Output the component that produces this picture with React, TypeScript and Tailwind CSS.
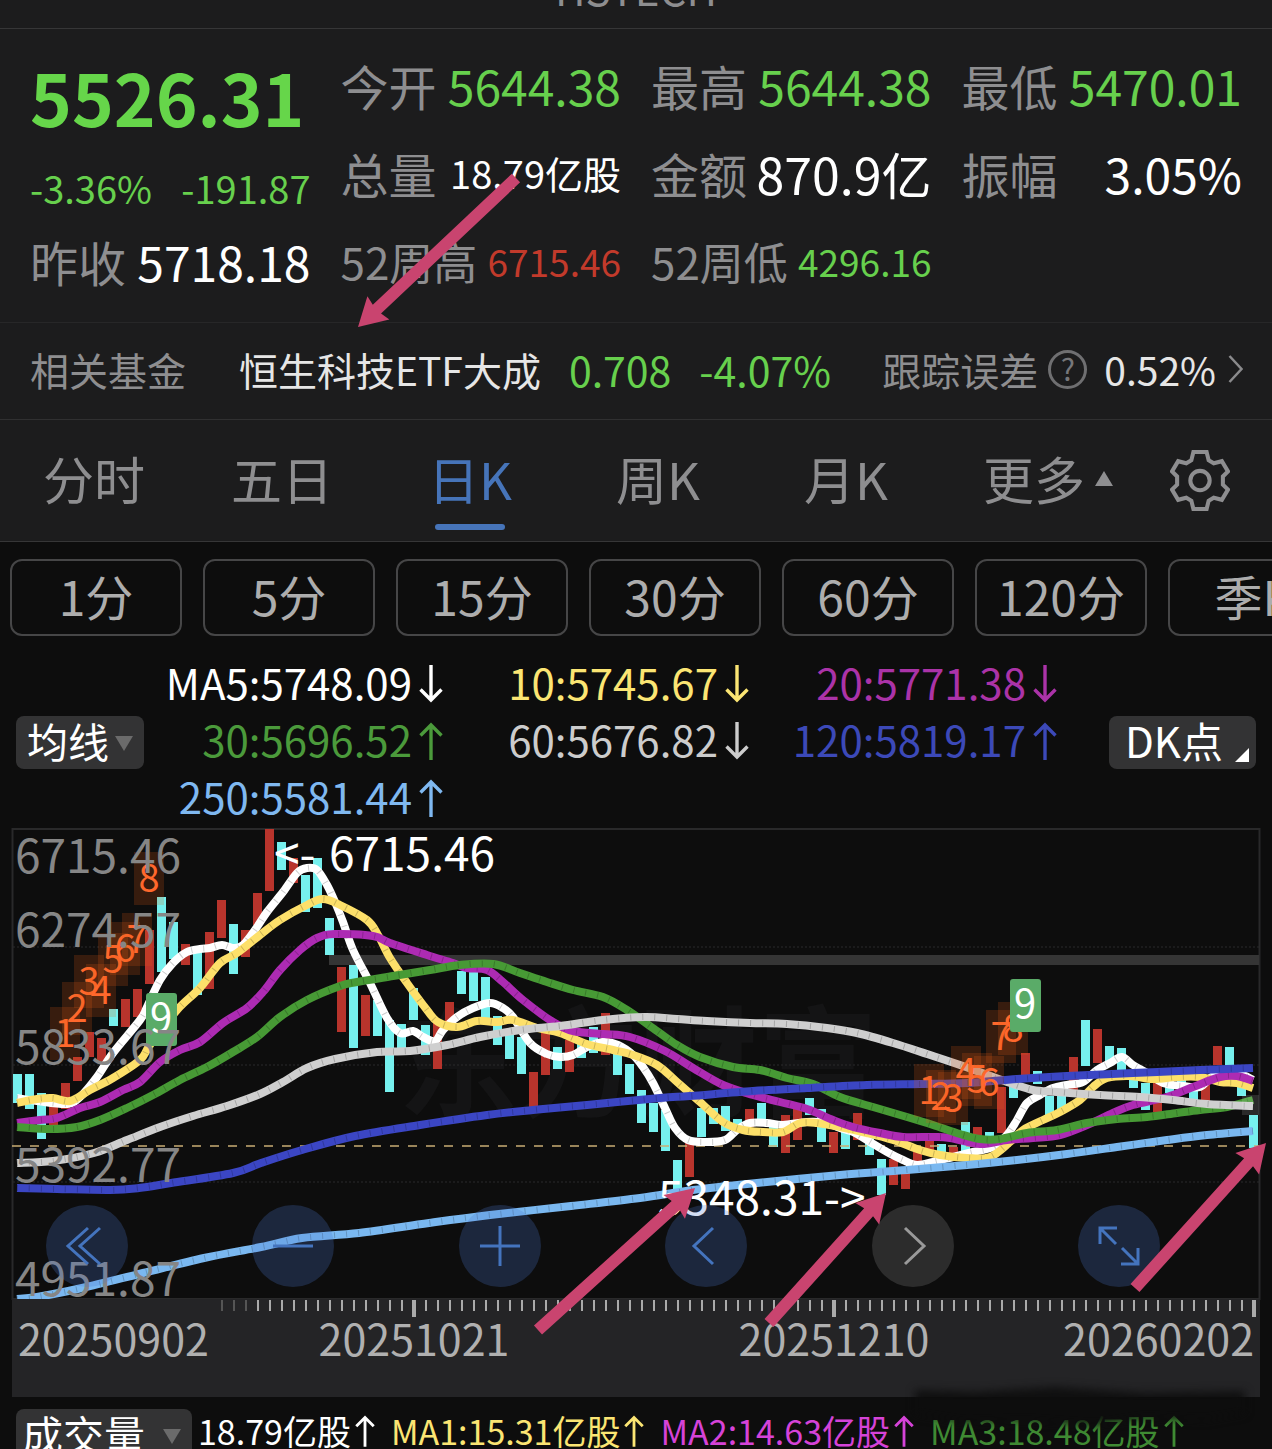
import * as React from "react"
import { clsx } from "clsx"

type Point = [number, number]

const UP = "#b8342c"
const DOWN = "#76f0ee"

const quotes = [
    [
        { label: "今开", value: "5644.38", labelClass: "text-[48px]", valueClass: "text-[48px] text-[#67d04d]" },
        { label: "总量", value: "18.79亿股", labelClass: "text-[48px]", valueClass: "text-[38px] text-white" },
        { label: "52周高", value: "6715.46", labelClass: "text-[44px]", valueClass: "text-[37px] text-[#c23a2b]" },
    ],
    [
        { label: "最高", value: "5644.38", labelClass: "text-[48px]", valueClass: "text-[48px] text-[#67d04d]" },
        { label: "金额", value: "870.9亿", labelClass: "text-[48px]", valueClass: "text-[50px] text-white" },
        { label: "52周低", value: "4296.16", labelClass: "text-[44px]", valueClass: "text-[37px] text-[#67d04d]" },
    ],
    [
        { label: "最低", value: "5470.01", labelClass: "text-[48px]", valueClass: "text-[48px] text-[#67d04d]" },
        { label: "振幅", value: "3.05%", labelClass: "text-[48px]", valueClass: "text-[48px] text-white" },
    ],
]

const tabs = ["分时", "五日", "日K", "周K", "月K"]
const periods = ["1分", "5分", "15分", "30分", "60分", "120分", "季K"]

const averages = [
    { text: "MA5:5748.09", up: false, color: "text-white" },
    { text: "10:5745.67", up: false, color: "text-[#fbe573]" },
    { text: "20:5771.38", up: false, color: "text-[#ab33a8]" },
    { text: "30:5696.52", up: true, color: "text-[#4b9a3b]" },
    { text: "60:5676.82", up: false, color: "text-[#cccccc]" },
    { text: "120:5819.17", up: true, color: "text-[#3c49b8]" },
    { text: "250:5581.44", up: true, color: "text-[#7fb8f0]" },
]

const volumes = [
    { text: "18.79亿股", color: "text-white" },
    { text: "MA1:15.31亿股", color: "text-[#fbe573]" },
    { text: "MA2:14.63亿股", color: "text-[#d543d8]" },
    { text: "MA3:18.48亿股", color: "text-[#3f8a33]" },
]

// [top, bottom, rising] for each trading day
const candles: [number, number, 0 | 1][] = [
    [1074, 1103, 0], [1074, 1109, 0], [1093, 1139, 0], [1095, 1125, 1], [1083, 1109, 1], [1057, 1081, 1],
    [1032, 1057, 1], [1038, 1062, 1], [1009, 1026, 0], [999, 1027, 1], [989, 1017, 1], [930, 984, 1],
    [897, 972, 0], [922, 959, 0], [944, 965, 1], [948, 995, 0], [932, 989, 1], [900, 938, 1],
    [924, 974, 0], [930, 957, 1], [893, 925, 1], [829, 891, 1], [842, 870, 0], [858, 883, 1],
    [875, 912, 0], [858, 908, 0], [918, 955, 0], [967, 1032, 1], [965, 1048, 0], [995, 1036, 1],
    [1000, 1036, 0], [1020, 1092, 0], [1024, 1048, 0], [988, 1020, 0], [1025, 1055, 0], [1023, 1069, 1],
    [1002, 1022, 1], [971, 994, 0], [971, 1001, 0], [977, 1018, 0], [1016, 1045, 0], [1033, 1059, 0],
    [1037, 1074, 0], [1072, 1107, 1], [1032, 1075, 1], [1047, 1069, 0], [1040, 1072, 1], [1043, 1058, 0],
    [1027, 1053, 0], [1013, 1055, 1], [1050, 1075, 0], [1064, 1094, 0], [1090, 1123, 0], [1103, 1132, 0],
    [1110, 1151, 0], [1160, 1190, 0], [1142, 1177, 1], [1108, 1137, 0], [1108, 1124, 0], [1106, 1131, 0],
    [1119, 1133, 0], [1109, 1127, 1], [1103, 1123, 0], [1127, 1147, 0], [1115, 1153, 1], [1109, 1140, 1],
    [1098, 1115, 0], [1109, 1142, 0], [1132, 1153, 1], [1129, 1149, 0], [1113, 1140, 1], [1137, 1155, 0],
    [1159, 1195, 0], [1159, 1185, 1], [1170, 1189, 1], [1152, 1166, 1], [1138, 1153, 1], [1144, 1160, 0],
    [1147, 1157, 1], [1122, 1152, 0], [1127, 1140, 1], [1132, 1147, 0], [1087, 1133, 1], [1080, 1098, 0],
    [1053, 1075, 1], [1071, 1084, 0], [1096, 1117, 0], [1093, 1113, 0], [1057, 1092, 1], [1020, 1066, 0],
    [1029, 1063, 1], [1046, 1064, 0], [1048, 1074, 0], [1074, 1088, 0], [1083, 1110, 0], [1083, 1112, 1],
    [1081, 1093, 0], [1068, 1090, 0], [1083, 1100, 0], [1083, 1101, 1], [1046, 1065, 1], [1047, 1065, 0],
    [1080, 1096, 0], [1115, 1148, 0],
]

const lines: { color: string; points: Point[] }[] = [
    {
        // MA5
        color: "#ffffff",
        points: [
            [17, 1098], [37, 1101], [67, 1104], [80, 1097], [97, 1077], [113, 1053], [140, 1020], [147, 1007],
            [160, 980], [173, 963], [187, 952], [200, 949], [210, 948], [222, 945], [233, 948], [243, 945],
            [257, 927], [267, 912], [283, 892], [297, 873], [307, 868], [317, 870], [327, 885], [335, 902],
            [343, 922], [353, 950], [370, 983], [387, 1018], [400, 1033], [413, 1031], [423, 1037], [435, 1041],
            [443, 1030], [457, 1017], [473, 1008], [490, 1003], [503, 1008], [513, 1017], [530, 1043],
            [547, 1054], [560, 1057], [573, 1055], [587, 1047], [603, 1042], [618, 1045], [633, 1055],
            [643, 1067], [653, 1083], [665, 1108], [675, 1128], [688, 1140], [707, 1142], [725, 1140],
            [737, 1130], [750, 1123], [767, 1123], [783, 1125], [807, 1122], [827, 1123], [840, 1128],
            [853, 1132], [870, 1142], [887, 1152], [903, 1160], [917, 1165], [933, 1162], [953, 1157],
            [973, 1152], [993, 1147], [1007, 1135], [1017, 1120], [1027, 1103], [1040, 1095], [1053, 1088],
            [1067, 1085], [1083, 1082], [1097, 1070], [1110, 1063], [1122, 1057], [1133, 1065], [1147, 1073],
            [1163, 1083], [1183, 1086], [1200, 1087], [1213, 1076], [1230, 1073], [1243, 1075], [1253, 1080],
        ],
    },
    {
        // MA10
        color: "#fde06a",
        points: [
            [17, 1103], [37, 1099], [53, 1098], [70, 1101], [90, 1090], [113, 1078], [140, 1060], [150, 1045],
            [177, 1010], [200, 988], [220, 963], [237, 953], [260, 935], [280, 920], [307, 905], [323, 899],
            [340, 905], [367, 920], [378, 935], [390, 958], [407, 983], [427, 1010], [438, 1022], [457, 1027],
            [477, 1021], [497, 1022], [513, 1020], [537, 1028], [560, 1033], [587, 1044], [613, 1050],
            [633, 1055], [657, 1065], [677, 1082], [700, 1102], [723, 1122], [743, 1130], [763, 1132],
            [783, 1132], [800, 1123], [817, 1123], [840, 1127], [867, 1133], [893, 1140], [920, 1150],
            [940, 1155], [967, 1158], [990, 1157], [1010, 1142], [1023, 1130], [1043, 1120], [1060, 1112],
            [1080, 1100], [1093, 1087], [1107, 1078], [1130, 1076], [1153, 1079], [1177, 1077], [1200, 1077],
            [1220, 1082], [1237, 1083], [1253, 1088],
        ],
    },
    {
        // MA20
        color: "#ad2bb3",
        points: [
            [17, 1123], [40, 1120], [57, 1118], [80, 1108], [100, 1102], [123, 1090], [140, 1082], [160, 1062],
            [180, 1050], [200, 1042], [223, 1023], [247, 1008], [263, 992], [280, 970], [300, 950], [317, 938],
            [335, 934], [373, 936], [390, 943], [427, 955], [453, 963], [467, 968], [487, 970], [503, 982],
            [523, 1000], [553, 1022], [573, 1031], [603, 1034], [630, 1037], [665, 1051], [693, 1068],
            [723, 1085], [753, 1095], [780, 1102], [807, 1109], [833, 1120], [853, 1127], [880, 1133],
            [903, 1137], [933, 1137], [950, 1138], [980, 1144], [1007, 1140], [1033, 1138], [1060, 1135],
            [1087, 1125], [1113, 1113], [1133, 1105], [1167, 1097], [1193, 1087], [1220, 1077], [1237, 1076],
            [1253, 1081],
        ],
    },
    {
        // MA30
        color: "#479a35",
        points: [
            [17, 1127], [50, 1129], [77, 1127], [100, 1120], [127, 1108], [153, 1095], [180, 1080],
            [207, 1067], [233, 1052], [257, 1037], [280, 1017], [307, 1000], [340, 986], [357, 982],
            [393, 976], [430, 970], [460, 965], [493, 964], [520, 973], [547, 982], [573, 990], [603, 997],
            [627, 1010], [657, 1031], [677, 1045], [700, 1057], [733, 1067], [760, 1070], [787, 1078],
            [813, 1084], [840, 1097], [873, 1107], [907, 1117], [933, 1125], [960, 1134], [980, 1139],
            [1000, 1139], [1027, 1133], [1057, 1130], [1087, 1123], [1117, 1119], [1147, 1117], [1177, 1113],
            [1200, 1110], [1227, 1107], [1253, 1100],
        ],
    },
    {
        // MA60
        color: "#cfcfcf",
        points: [
            [17, 1163], [53, 1161], [94, 1153], [127, 1140], [160, 1127], [193, 1116], [227, 1106],
            [260, 1094], [283, 1082], [307, 1068], [335, 1059], [377, 1052], [410, 1051], [447, 1045],
            [480, 1037], [520, 1030], [560, 1026], [603, 1020], [645, 1017], [677, 1019], [707, 1021],
            [750, 1023], [787, 1024], [827, 1028], [857, 1033], [893, 1043], [927, 1054], [960, 1065],
            [1007, 1082], [1033, 1090], [1057, 1092], [1100, 1095], [1140, 1097], [1173, 1100], [1207, 1104],
            [1253, 1106],
        ],
    },
    {
        // MA120
        color: "#3b46c4",
        points: [
            [17, 1188], [57, 1189], [110, 1190], [139, 1188], [171, 1183], [233, 1173], [261, 1163],
            [302, 1150], [355, 1136], [420, 1125], [487, 1115], [533, 1110], [587, 1105], [660, 1098],
            [690, 1096], [753, 1091], [807, 1088], [867, 1085], [920, 1084], [967, 1083], [1017, 1079],
            [1067, 1076], [1133, 1073], [1200, 1070], [1253, 1068],
        ],
    },
    {
        // MA250
        color: "#7ab8f0",
        points: [
            [17, 1299], [37, 1297], [82, 1288], [143, 1273], [204, 1258], [261, 1247], [302, 1238],
            [359, 1233], [429, 1223], [490, 1215], [571, 1206], [640, 1198], [693, 1190], [757, 1183],
            [840, 1175], [907, 1170], [967, 1165], [1017, 1160], [1067, 1154], [1117, 1147], [1167, 1140],
            [1207, 1135], [1253, 1131],
        ],
    },
]

// TD sequence numbers: [label, center x, baseline y]
const counts: [string, number, number][] = [
    ["1", 65, 1047], ["2", 77, 1022], ["3", 89, 995], ["4", 101, 1004], ["5", 113, 973], ["6", 125, 962],
    ["7", 137, 953], ["8", 149, 892], ["1", 929, 1104], ["2", 941, 1110], ["3", 953, 1112], ["4", 966, 1086],
    ["5", 977, 1093], ["6", 989, 1096], ["7", 1001, 1050], ["8", 1013, 1042],
]
const nines: Point[] = [[161, 1032], [1025, 1018]]

const prices: [string, number][] = [
    ["6715.46", 873], ["6274.57", 947], ["5833.67", 1064], ["5392.77", 1182], ["4951.87", 1296],
]

const smooth = (p: Point[]) => {
    let d = `M${p[0][0]} ${p[0][1]}`
    for (let i = 0; i < p.length - 1; i++) {
        const a = p[i - 1] || p[i]
        const b = p[i]
        const c = p[i + 1]
        const e = p[i + 2] || c
        d += ` C${b[0] + (c[0] - a[0]) / 6} ${b[1] + (c[1] - a[1]) / 6} ${c[0] - (e[0] - b[0]) / 6} ${c[1] - (e[1] - b[1]) / 6} ${c[0]} ${c[1]}`
    }
    return d
}

const TrendArrow = ({ up, className }: { up: boolean; className?: string }) => (
    <svg viewBox="0 0 24 38" className={clsx("shrink-0", className)} fill="none" stroke="currentColor" strokeWidth="3.4" aria-hidden="true">
        {up ? <path d="M12 38V3M1.5 13.5 12 3l10.5 10.5" /> : <path d="M12 0v35M1.5 24.5 12 35l10.5-10.5" />}
    </svg>
)

const IndicatorSelect = ({ label, className }: { label: string; className: string }) => (
    <div className={clsx("relative shrink-0", className)}>
        <select aria-label={label} className="h-[53px] w-full appearance-none rounded-lg bg-[#333334] pb-1 text-[41px] leading-[47px] text-white">
            <option>{label}</option>
        </select>
        <svg viewBox="0 0 18 15" className="pointer-events-none absolute right-[11px] top-5 w-[18px]" fill="#6b6b6b" aria-hidden="true">
            <path d="M0 0h18L9 15z" />
        </svg>
    </div>
)

const Quote = () => (
    <section className="grid grid-cols-4 gap-x-[30px] border-b border-[#272728] px-[30px] pb-[14px] pt-[15px]">
        <div>
            <div className="flex h-[104px] items-center text-[71px] font-bold text-[#66d64a]">5526.31</div>
            <div className="flex h-[72px] items-center justify-between pt-2 text-[38px] text-[#67d04d]">
                <span>-3.36%</span>
                <span>-191.87</span>
            </div>
            <div className="flex h-[88px] items-center justify-between pb-[6px] text-[48px] text-white">
                <span className="text-[#8e8e90]">昨收</span>
                <span>5718.18</span>
            </div>
        </div>
        {quotes.map((column, i) => (
            <div key={i}>
                {column.map((item) => (
                    <div key={item.label} className="flex h-[88px] items-center justify-between pb-[6px]">
                        <span className={clsx("text-[#8e8e90]", item.labelClass)}>{item.label}</span>
                        <span className={item.valueClass}>{item.value}</span>
                    </div>
                ))}
            </div>
        ))}
    </section>
)

const RelatedFund = () => (
    <a href="#fund" className="flex h-[97px] items-center border-b border-[#303031] pb-1 pl-[30px] pr-[29px] text-[39px] text-[#e6e6e6]">
        <span className="mr-[53px] text-[#8e8e90]">相关基金</span>
        <span className="mr-[28px]">恒生科技ETF大成</span>
        <span className="mr-[28px] text-[41px] text-[#67d04d]">0.708</span>
        <span className="text-[41px] text-[#67d04d]">-4.07%</span>
        <span className="ml-auto text-[#8e8e90]">跟踪误差</span>
        <span className="ml-[10px] flex size-[39px] items-center justify-center rounded-full border-[3px] border-[#6f6f71] pb-[3px] text-[30px] text-[#77777a]">?</span>
        <span className="ml-[17px] mr-3">0.52%</span>
        <svg viewBox="0 0 15 28" className="w-[15px]" fill="none" stroke="#8a8a8c" strokeWidth="2.5" aria-hidden="true">
            <path d="m1.500 1 12 13-12 13" />
        </svg>
    </a>
)

const Tabs = () => (
    <nav className="grid h-[122px] grid-cols-[188fr_188fr_188fr_188fr_188fr_216fr_88fr] border-b border-[#363637] pr-7 text-[51px] text-[#8e8e90]">
        {tabs.map((tab) => (
            <button key={tab} className={clsx("relative pb-1", tab === "日K" && "text-[#4674b9]")}>
                {tab}
                {tab === "日K" && <span className="absolute bottom-[11px] left-1/2 h-[6px] w-[70px] -translate-x-1/2 rounded-full bg-[#4674b9]" />}
            </button>
        ))}
        <button className="flex items-center justify-center gap-[10px] pb-1">
            更多
            <svg viewBox="0 0 18 15" className="w-[18px]" fill="currentColor" aria-hidden="true">
                <path d="M9 0l9 15H0z" />
            </svg>
        </button>
        <button aria-label="设置" className="flex items-center justify-center">
            <svg viewBox="0 0 59 60" className="w-[60px]" fill="none" stroke="currentColor" strokeWidth="4" aria-hidden="true">
                <path d="M23 2h13l2 8 5 3 8-2 6 10-5 5v8l5 5-6 10-8-2-5 3-2 8H23l-2-8-5-3-8 2-6-10 5-5v-8l-5-5 6-10 8 2 5-3z" />
                <circle cx="29.500" cy="30" r="9.500" />
            </svg>
        </button>
    </nav>
)

const Periods = () => (
    <div className="flex gap-[21px] overflow-hidden pl-[10px] pt-[17px]">
        {periods.map((period) => (
            <button key={period} className="h-[77px] w-[172px] shrink-0 rounded-xl border-2 border-[#464647] pb-[6px] text-[48px] leading-none text-[#adadad]">
                {period}
            </button>
        ))}
    </div>
)

const Averages = () => (
    <div className="flex items-center px-4 pt-[21px]">
        <IndicatorSelect label="均线" className="w-32 [&>select]:pl-[11px]" />
        <div className="mr-[52px] grid flex-1 grid-cols-[299fr_306fr_308fr]">
            {averages.map((item) => (
                <div key={item.text} className={clsx("flex h-[57px] items-center justify-end gap-[7px] whitespace-nowrap pb-[3px] text-[42px]", item.color)}>
                    <span className="pb-1">{item.text}</span>
                    <TrendArrow up={item.up} className="w-6" />
                </div>
            ))}
        </div>
        <button className="flex h-[53px] shrink-0 items-center rounded-lg bg-[#333334] pl-4 pr-[7px] text-[42px] text-white">
            <span className="pb-[6px]">DK点</span>
            <svg viewBox="0 0 14 14" className="ml-3 mt-6 w-[14px]" fill="currentColor" aria-hidden="true">
                <path d="M14 0v14H0z" />
            </svg>
        </button>
    </div>
)

const controls = [
    { label: "最早", d: "M42 23 22 41l20 18M54 23 34 41l20 18" },
    { label: "缩小", d: "M21 41h40" },
    { label: "放大", d: "M21 41h40M41 21v40" },
    { label: "向左", d: "M48 23 29 41l19 18" },
    { label: "向右", d: "M33 23l19 18-19 18", disabled: true },
    { label: "全屏", d: "M22 39V23h17M22 23l16 16M60 43v16H43M60 59 44 43" },
]

const Chart = () => (
    <div className="relative">
        <svg viewBox="0 828 1272 569" className="block w-full" role="img" aria-label="恒生科技指数日K线">
            {/* Watermark */}
            <text x="398" y="1108" fontSize="120" fontWeight="700" fill="#141415">东方财富</text>

            {/* Frame and grid */}
            <rect x="12.500" y="829" width="1247" height="470" fill="none" stroke="#29292a" strokeWidth="2" />
            {[947, 1065, 1182].map((y) => (
                <path key={y} d={`M13 ${y}H1259`} stroke="#2b2b2c" strokeWidth="1" strokeDasharray="2 2" />
            ))}
            <rect x="329" y="955" width="930" height="10" fill="#353535" />

            {candles.map(([top, bottom, rising], i) => (
                <rect key={i} x={13 + i * 12} y={top} width="9" height={bottom - top} fill={rising ? UP : DOWN} />
            ))}
            <path d="M12 1146H1259" stroke="#c9ad74" strokeWidth="1.500" strokeDasharray="9 9" />

            {/* Moving averages, one faint joint per day */}
            {lines.map((line) => {
                const d = smooth(line.points)
                return (
                    <g key={line.color} fill="none">
                        <path d={d} stroke={line.color} strokeWidth="8" strokeLinejoin="round" />
                        <path d={d} stroke="#000000" strokeOpacity="0.200" strokeWidth="6" strokeDasharray="1 11" />
                    </g>
                )
            })}
            <rect x="1242" y="1095" width="17" height="20" fill="#ffffff" fillOpacity="0.120" />

            {/* Sequence counts */}
            {counts.map(([n, x, y], i) => (
                <g key={i}>
                    <rect x={x - 15} y={y - 40} width="30" height="53" fill="#e05a14" fillOpacity="0.200" />
                    <text x={x} y={y} fontSize="38" textAnchor="middle" fill="#ff682c">{n}</text>
                </g>
            ))}
            {nines.map(([x, y]) => (
                <g key={x}>
                    <rect x={x - 15} y={y - 39} width="31" height="53" rx="3" fill="#5aab68" />
                    <text x={x} y={y} fontSize="40" textAnchor="middle" fill="#ffffff">9</text>
                </g>
            ))}

            <g fontSize="46" fill="#868686">
                {prices.map(([price, y]) => (
                    <text key={price} x="15" y={y}>{price}</text>
                ))}
            </g>
            <g fontSize="46" fill="#ffffff">
                <text x="274" y="871">&lt;-</text>
                <text x="495" y="871" textAnchor="end">6715.46</text>
                <text x="658" y="1215">5348.31-&gt;</text>
            </g>

            {/* Date axis */}
            <rect x="12" y="1299" width="1248" height="98" fill="#242426" />
            {Array.from({ length: 87 }, (_, i) => i + 17).map((i) => {
                const major = i === 33 || i === 68 || i === 103
                return (
                    <rect key={i} x={(major ? 412 : 413) + (i - 33) * 12} y="1300" width={major ? 4 : 2} height={major ? 17 : 11} fill={i < 20 ? "#555555" : "#aaaaaa"} />
                )
            })}
            <g fontSize="43" fill="#b0b0b0">
                <text x="18" y="1356">20250902</text>
                <text x="414" y="1356" textAnchor="middle">20251021</text>
                <text x="834" y="1356" textAnchor="middle">20251210</text>
                <text x="1254" y="1356" textAnchor="end">20260202</text>
            </g>
        </svg>

        {/* Floating chart controls */}
        <div className="absolute inset-x-0 top-[66.2%] flex justify-between pl-[46px] pr-[112px]">
            {controls.map((control) => (
                <button
                    key={control.label}
                    aria-label={control.label}
                    disabled={control.disabled}
                    className={clsx("size-[82px] rounded-full", control.disabled ? "bg-[#8a8a8a]/25 text-[#9a9a9a]" : "bg-[#4a78d0]/25 text-[#4474be]")}
                >
                    <svg viewBox="0 0 82 82" fill="none" stroke="currentColor" strokeWidth="3" aria-hidden="true">
                        <path d={control.d} />
                    </svg>
                </button>
            ))}
        </div>
    </div>
)

const Volume = () => (
    <div className="flex h-[52px] gap-4 overflow-hidden whitespace-nowrap pl-4 pt-3 text-[34px]">
        <div className="flex">
            <IndicatorSelect label="成交量" className="w-44 [&>select]:pl-[6px]" />
        </div>
        <div className="-ml-[10px] flex gap-4">
            {volumes.map((item) => (
                <div key={item.text} className={clsx("flex h-11 items-center gap-1", item.color)}>
                    <span>{item.text}</span>
                    <TrendArrow up className="w-5" />
                </div>
            ))}
        </div>
    </div>
)

// [tail x, tail y, tip x, tip y]
const pointers = [
    [516, 178, 358, 327],
    [538, 1330, 695, 1188],
    [769, 1323, 886, 1193],
    [1135, 1288, 1266, 1143],
]

const Pointers = () => (
    <svg viewBox="0 0 1272 1449" className="pointer-events-none absolute left-0 top-0 w-full" aria-hidden="true">
        {pointers.map(([x1, y1, x2, y2]) => {
            const length = Math.hypot(x2 - x1, y2 - y1)
            const angle = (Math.atan2(y2 - y1, x2 - x1) * 180) / Math.PI
            return (
                <path
                    key={x1}
                    d={`M0-6H${length - 26}l-2-10L${length} 0l-28 16 2-10H0z`}
                    transform={`translate(${x1} ${y1}) rotate(${angle})`}
                    fill="#c9446f"
                />
            )
        })}
        {/* Smudge over the bottom right legend */}
        <path
            d="M915 1390l60 2 80-5 90 6 100-2v22l-40 7-60-3-50 8-70-5-60 2-50-8z"
            fill="#0d0d0d"
            fillOpacity="0.900"
            className="blur-[4px]"
        />
    </svg>
)

export default function App() {
    return (
        <main lang="zh-CN" className="relative overflow-hidden bg-[#0d0d0d] font-['Noto_Sans_CJK_SC',sans-serif] leading-none">
            <div className="bg-[#1c1c1d]">
                <header className="flex h-[29px] items-end justify-center overflow-hidden border-b border-[#363637] pb-[19px]">
                    <h1 className="text-[42px] text-[#8e8e90]">HSTECH</h1>
                </header>
                <Quote />
                <RelatedFund />
                <Tabs />
            </div>
            <Periods />
            <Averages />
            <Chart />
            <Volume />
            <Pointers />
        </main>
    )
}
